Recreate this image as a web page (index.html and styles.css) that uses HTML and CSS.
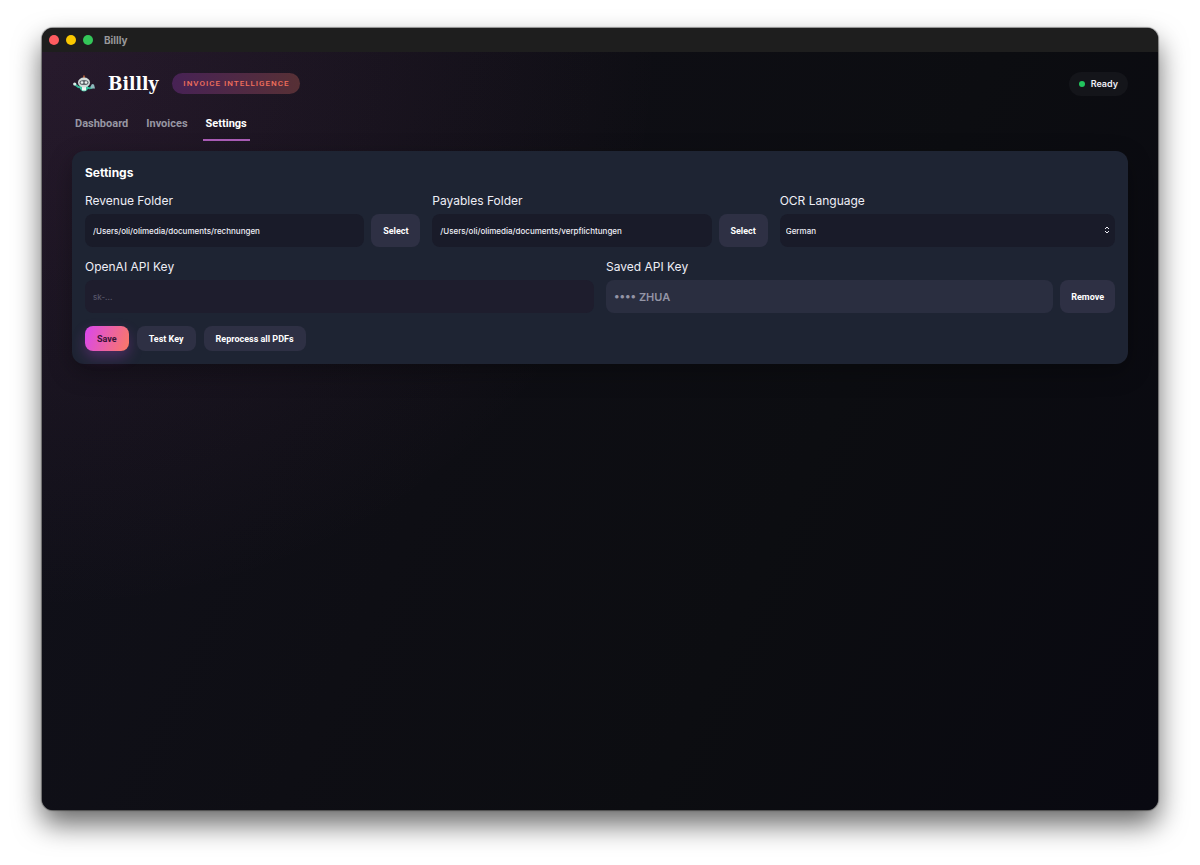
FILE: index.html
```html
<!DOCTYPE html>
<html lang="en">

<head>
  <meta charset="UTF-8">
  <meta name="viewport" content="width=device-width, initial-scale=1">
  <title>Billly</title>
  <link rel="stylesheet" href="styles.css">
</head>

<body>
  <div class="window">
    <div class="titlebar">
      <span class="light red"></span>
      <span class="light yellow"></span>
      <span class="light green"></span>
      <span class="window-title">Billly</span>
    </div>

    <div class="app">
      <header class="header">
        <svg class="logo" viewBox="0 0 24 24" aria-hidden="true">
          <path d="M12 3.500v3" stroke="#d9713c" stroke-width="1.4"/>
          <path d="M3 12.500q3 3 6 3M21 15q-3 2-6 .5" stroke="#35b597" stroke-width="2" fill="none"/>
          <circle cx="2.700" cy="12" r="1.600" fill="#d8efe9"/>
          <path d="M20 12l2 .5 1 4h-4l-.5-2z" fill="#8eb9bd"/>
          <path d="M8 14h8v3q-4 5-8 0z" fill="#3ac4a2"/>
          <path d="M10 14.500h4v4h-4z" fill="#eef5f2"/>
          <ellipse cx="12" cy="10.500" rx="6" ry="5" fill="#d3dbd9"/>
          <ellipse cx="12" cy="10.500" rx="4.500" ry="2.600" fill="#60676d"/>
          <circle cx="10" cy="10.500" r="1.300" fill="#e8efed"/>
          <circle cx="14" cy="10.500" r="1.300" fill="#e8efed"/>
        </svg>
        <h1 class="brand">Billly</h1>
        <span class="badge">INVOICE INTELLIGENCE</span>
        <span class="status"><span class="status-dot"></span>Ready</span>
      </header>

      <nav class="tabs">
        <a href="#dashboard">Dashboard</a>
        <a href="#invoices">Invoices</a>
        <a href="#settings" class="active">Settings</a>
      </nav>

      <main class="panel" id="settings">
        <h2>Settings</h2>
        <form>
          <div class="row three">
            <div class="field">
              <label for="revenue">Revenue Folder</label>
              <div class="control">
                <input type="text" id="revenue" value="/Users/oli/olimedia/documents/rechnungen">
                <button type="button">Select</button>
              </div>
            </div>
            <div class="field">
              <label for="payables">Payables Folder</label>
              <div class="control">
                <input type="text" id="payables" value="/Users/oli/olimedia/documents/verpflichtungen">
                <button type="button">Select</button>
              </div>
            </div>
            <div class="field">
              <label for="language">OCR Language</label>
              <div class="control dropdown">
                <select id="language">
                  <option>German</option>
                  <option>English</option>
                </select>
                <svg class="chevrons" viewBox="0 0 8 10" aria-hidden="true">
                  <path d="M2 4l2-2 2 2M2 6l2 2 2-2"/>
                </svg>
              </div>
            </div>
          </div>

          <div class="row two">
            <div class="field">
              <label for="api-key">OpenAI API Key</label>
              <div class="control">
                <input type="text" id="api-key" class="key" placeholder="sk-...">
              </div>
            </div>
            <div class="field">
              <label for="saved-key">Saved API Key</label>
              <div class="control">
                <input type="text" id="saved-key" class="saved" value="•••• ZHUA" readonly>
                <button type="button">Remove</button>
              </div>
            </div>
          </div>

          <div class="actions">
            <button type="button" class="primary">Save</button>
            <button type="button">Test Key</button>
            <button type="button">Reprocess all PDFs</button>
          </div>
        </form>
      </main>
    </div>
  </div>
</body>

</html>
```
FILE: styles.css
```css
* {
  box-sizing: border-box;
}
body {
  margin: 0;
  padding: 28px 42px 55px;
  min-height: 100vh;
  display: flex;
  background: #ffffff;
  color: #eeeef6;
  font-family: 'Inter', sans-serif;
}

/* window frame */
.window {
  flex: 1;
  min-width: 0;
  display: flex;
  flex-direction: column;
  border-radius: 11px;
  overflow: hidden;
  background: #0c0c12;
  box-shadow: 0 0 1px 1px rgba(0,0,0,0.4), 0 14px 28px rgba(0,0,0,0.6);
}
.titlebar {
  display: flex;
  align-items: center;
  gap: 7px;
  height: 24px;
  padding: 0 7px;
  background: #1e1e1e;
}
.light {
  width: 10px;
  height: 10px;
  border-radius: 50%;
}
.red {
  background: #ff5c60;
}
.yellow {
  background: #fac800;
}
.green {
  background: #34c759;
}
.window-title {
  margin-left: 4px;
  color: #98989a;
  font-size: 10px;
  font-weight: 700;
}
.app {
  flex: 1;
  padding: 19px 30px 30px;
  background:
    radial-gradient(ellipse 620px 560px at 0 0, rgba(200,92,170,0.12), transparent),
    linear-gradient(115deg, #11111b 0%, #0e0e14 40%, #0c0d11 65%, #090911 100%);
}

/* header */
.header {
  display: flex;
  align-items: center;
  height: 25px;
}
.logo {
  width: 24px;
  height: 24px;
}
.brand {
  margin: 0 0 0 12px;
  color: #ffffff;
  font: bold 19px/25px 'DejaVu Serif Condensed', 'DejaVu Serif', serif;
}
.badge {
  margin-left: 14px;
  padding: 0 11px;
  border-radius: 11px;
  background: linear-gradient(90deg, #472255, #573035);
  color: #f2705c;
  font-family: 'Roboto', sans-serif;
  font-size: 8px;
  font-weight: 500;
  line-height: 21px;
  letter-spacing: 1px;
}
.status {
  display: flex;
  align-items: center;
  gap: 6px;
  margin-left: auto;
  padding: 0 10px;
  border-radius: 12px;
  background: #14151a;
  font-size: 9px;
  font-weight: 600;
  line-height: 24px;
}
.status-dot {
  width: 6px;
  height: 6px;
  border-radius: 50%;
  background: #22c55e;
}

/* tabs */
.tabs {
  display: flex;
  gap: 12px;
  margin-top: 12px;
}
.tabs a {
  padding: 0 3px;
  border-bottom: 2px solid transparent;
  color: #9796a3;
  font-family: 'Roboto', sans-serif;
  font-size: 11px;
  font-weight: 700;
  line-height: 31px;
  text-decoration: none;
}
.tabs a.active {
  border-color: #a85bb4;
  color: #ffffff;
}

/* settings */
.panel {
  margin-top: 10px;
  padding: 13px;
  border-radius: 12px;
  background: #1e2433;
  box-shadow: 0 8px 24px rgba(0,0,0,0.3);
}
.panel h2 {
  margin: 0 0 11px;
  color: #ffffff;
  font-size: 12px;
  font-weight: 700;
  line-height: 18px;
}
.row {
  display: grid;
  gap: 12px;
  margin-bottom: 12px;
}
.three {
  grid-template-columns: repeat(3, 1fr);
}
.two {
  grid-template-columns: repeat(2, 1fr);
}
.field label {
  display: block;
  margin-bottom: 5px;
  font-size: 12px;
  line-height: 16px;
}
.control {
  display: flex;
  gap: 7px;
  height: 33px;
}
input,
select,
button {
  border: 0;
  border-radius: 8px;
  font-family: inherit;
  font-size: 8px;
}
input,
select {
  flex: 1;
  min-width: 0;
  padding: 0 8px;
  background: #191b29;
  color: #eeeef6;
  font-weight: 500;
}
select {
  padding: 0 6px;
  appearance: none;
}
.dropdown {
  position: relative;
}
.chevrons {
  position: absolute;
  top: 11px;
  right: 4px;
  width: 8px;
  height: 10px;
  fill: none;
  stroke: #eeeef6;
  pointer-events: none;
}
.key {
  background: #1e1d2d;
}
.key::placeholder {
  color: #56566a;
}
.saved {
  background: #2a2e40;
  color: #9394a5;
  font-size: 11px;
  font-weight: 600;
}
button {
  padding: 0 11px;
  background: #2e3044;
  color: #ffffff;
  font-family: 'Roboto', sans-serif;
  font-size: 9px;
  font-weight: 700;
}
.control button {
  min-width: 49px;
}
.actions {
  display: flex;
  gap: 8px;
  padding-top: 1px;
}
.actions button {
  height: 25px;
  padding: 0 12px;
}
.actions .primary {
  background: linear-gradient(110deg, #d946ef, #fb7a62);
  box-shadow: 0 6px 14px rgba(217,70,239,0.25);
  color: #3a1238;
}
```
